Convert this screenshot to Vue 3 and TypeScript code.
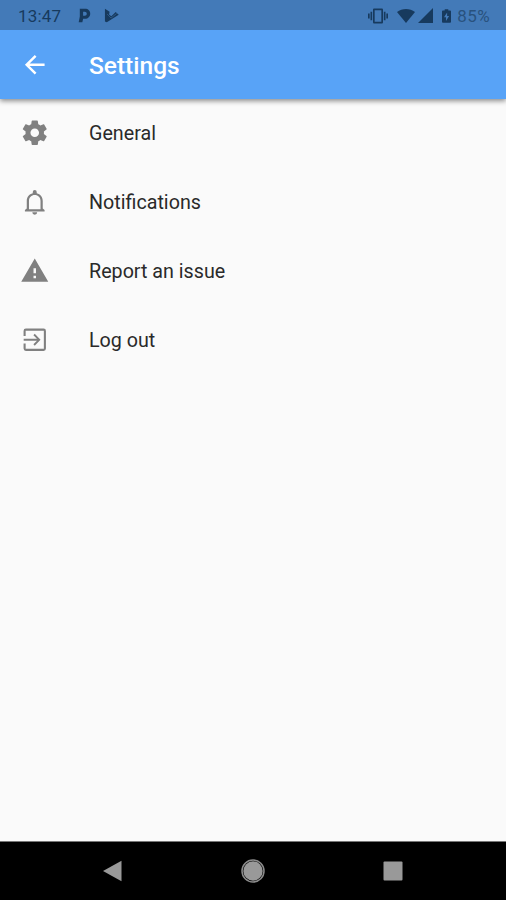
<script setup lang="ts">
interface SettingItem {
  label: string
  path: string
}

const items: SettingItem[] = [
  {
    label: 'General',
    path: 'M19.43 12.98c.04-.32.07-.64.07-.98s-.03-.66-.07-.98l2.11-1.65c.19-.15.24-.42.12-.64l-2-3.46c-.12-.22-.39-.3-.61-.22l-2.49 1c-.52-.4-1.08-.73-1.69-.98l-.38-2.65C14.46 2.18 14.25 2 14 2h-4c-.25 0-.46.18-.49.42l-.38 2.65c-.61.25-1.17.59-1.69.98l-2.49-1c-.23-.09-.49 0-.61.22l-2 3.46c-.13.22-.07.49.12.64l2.11 1.65c-.04.32-.07.65-.07.98s.03.66.07.98l-2.11 1.65c-.19.15-.24.42-.12.64l2 3.46c.12.22.39.3.61.22l2.49-1c.52.4 1.08.73 1.69.98l.38 2.65c.03.24.24.42.49.42h4c.25 0 .46-.18.49-.42l.38-2.65c.61-.25 1.17-.59 1.69-.98l2.49 1c.23.09.49 0 .61-.22l2-3.46c.12-.22.07-.49-.12-.64l-2.11-1.65zM12 15.500c-1.930 0-3.500-1.570-3.500-3.500s1.570-3.500 3.500-3.500 3.500 1.570 3.500 3.500-1.570 3.500-3.500 3.500z',
  },
  {
    label: 'Notifications',
    path: 'M10 20.600h4a2 1.900 0 0 1-4 0zM18.500 17.400V11.300c0-3.100-1.900-5.600-4.900-6.300V4a1.600 1.600 0 0 0-3.200 0v1C7.400 5.700 5.500 8.200 5.500 11.300v6.100l-1.500 1.300v1.200h16v-1.200zM16.700 18.200H7.300v-6.900c0-2.800 2-4.800 4.700-4.800s4.700 2 4.700 4.800z',
  },
  { label: 'Report an issue', path: 'M1 21h22L12 2 1 21zm12-3h-2v-2h2v2zm0-4h-2v-4h2v4z' },
  {
    label: 'Log out',
    path: 'M10.900 15.700l1.100 1.100 4.700-4.800L12 7.200l-1.100 1.100 2.900 2.900H3v1.600h10.800zM19.200 2.900H4.800a1.900 1.900 0 0 0-1.900 1.900V9h1.700V4.600h14.800v14.800H4.600V15H2.900v4.200a1.900 1.900 0 0 0 1.900 1.900h14.400a1.900 1.900 0 0 0 1.900-1.900V4.800a1.900 1.900 0 0 0-1.900-1.900z',
  },
]
</script>

<template>
  <div class="screen">
    <header class="status">
      <span class="time">13:47</span>
      <svg class="parking" viewBox="0 0 13 16">
        <path fill="currentColor" fill-rule="evenodd" d="M1.500.800H7C10.500.800 12.600 3 12.600 6S10.300 11.400 7 11.400H5l-.8 3.800H.3L1.500 9zM5 4v4.200h1.800c1.400 0 2.100-.8 2.100-2.100S8.100 4 6.800 4z" />
      </svg>
      <svg class="check" viewBox="0 0 16 16">
        <path d="M1 .800l5 3.100L5.400 7l2.400 1.800 4.700-4.600 3.200 3L3 15.200l-2-.8z" fill="currentColor" />
        <path d="M3.300 6.500L7.500 10.700 13.500 5.800" fill="none" stroke="#437ab8" stroke-width=".5" />
      </svg>
      <span class="spacer"></span>
      <svg class="vibrate" viewBox="0 0 24 24">
        <path fill="currentColor" d="M0 15h2V9H0v6zm3 2h2V7H3v10zm19-8v6h2V9h-2zm-3 8h2V7h-2v10zM16.500 3h-9C6.670 3 6 3.670 6 4.500v15c0 .83.67 1.500 1.500 1.500h9c.83 0 1.500-.67 1.500-1.500v-15c0-.83-.67-1.500-1.500-1.500zM16 19H8V5h8v14z" />
      </svg>
      <svg class="wifi" viewBox="0 0 18 14">
        <path fill="currentColor" d="M0 3C5-.9 13-.9 18 3L9 14z" />
      </svg>
      <svg class="signal" viewBox="0 0 15 15"><path fill="currentColor" d="M15 0v15H0z" /></svg>
      <svg class="battery" viewBox="0 0 10 15">
        <path fill="currentColor" fill-rule="evenodd" d="M3 0h4v1.500h2q1 0 1 1V14q0 1-1 1H1q-1 0-1-1V2.500q0-1 1-1h2zM5.700 3.500L2.200 9h2.200v4l3.500-5.500H5.700z" />
      </svg>
      <span class="percent">85%</span>
    </header>

    <div class="appbar">
      <svg class="icon" viewBox="0 0 24 24">
        <path fill="currentColor" d="M20 11H7.830l5.590-5.590L12 4l-8 8 8 8 1.410-1.410L7.830 13H20v-2z" />
      </svg>
      <h1 class="title">Settings</h1>
    </div>

    <main class="list">
      <div v-for="item in items" :key="item.label" class="row">
        <svg class="icon" viewBox="0 0 24 24"><path fill="currentColor" :d="item.path" /></svg>
        <span class="label">{{ item.label }}</span>
      </div>
    </main>

    <nav class="navbar">
      <svg viewBox="0 0 24 24"><path d="M2 12L20.500 1.700v20.600z" fill="#999" /></svg>
      <svg viewBox="0 0 24 24">
        <circle cx="12" cy="12" r="11" fill="none" stroke="#8c8c8c" stroke-width="1.500" />
        <circle cx="12" cy="12" r="9.700" fill="#999" />
      </svg>
      <svg viewBox="0 0 24 24"><rect x="2.500" y="2.500" width="19" height="19" rx="1" fill="#999" /></svg>
    </nav>
  </div>
</template>

<style>
body {
  margin: 0;
}
</style>

<style scoped>
.screen {
  display: flex;
  flex-direction: column;
  width: 506px;
  height: 900px;
  overflow: hidden;
  background: #fafafa;
  font-family: Roboto, sans-serif;
}
svg {
  display: block;
  flex: none;
}
.status {
  display: flex;
  align-items: center;
  flex: none;
  box-sizing: border-box;
  height: 30px;
  padding: 1px 16px 0 18px;
  background: #437ab8;
  color: #173a5e;
  font-size: 17px;
}
.time {
  width: 59.500px;
  padding-top: 1px;
  letter-spacing: 0.2px;
}
.parking {
  width: 13px;
  height: 15px;
}
.check {
  width: 15px;
  height: 15px;
  margin-left: 13px;
}
.spacer {
  flex: 1;
}
.vibrate {
  width: 20px;
  height: 20px;
}
.wifi {
  width: 18px;
  height: 14px;
  margin-left: 9px;
}
.signal {
  width: 15px;
  height: 15px;
  margin-left: 3px;
}
.battery {
  width: 9px;
  height: 14px;
  margin-left: 9px;
}
.percent {
  margin-left: 6px;
  padding-top: 1px;
  letter-spacing: 0.4px;
  color: #29527e;
}
.appbar {
  display: flex;
  align-items: center;
  flex: none;
  position: relative;
  height: 68.500px;
  padding-left: 20px;
  background: #58a3f7;
  color: #fff;
  box-shadow: 0 2px 5px rgba(0, 0, 0, 0.45);
  clip-path: inset(0 0 -12px 0);
}
.icon {
  width: 29.500px;
  height: 29.500px;
}
.title {
  margin: 4px 0 0 39.500px;
  font-size: 24.500px;
  line-height: 30px;
  font-weight: 500;
}
.list {
  flex: 1;
}
.row {
  display: flex;
  align-items: center;
  height: 69px;
  padding-left: 20px;
  color: #808080;
}
.label {
  margin-left: 39.500px;
  font-size: 19.700px;
  color: #2a2a2a;
}
.navbar {
  display: flex;
  align-items: center;
  justify-content: center;
  gap: 116px;
  flex: none;
  box-sizing: border-box;
  height: 59px;
  border-top: 1px solid #777;
  background: #000;
}
.navbar svg {
  width: 24px;
  height: 24px;
}
</style>
